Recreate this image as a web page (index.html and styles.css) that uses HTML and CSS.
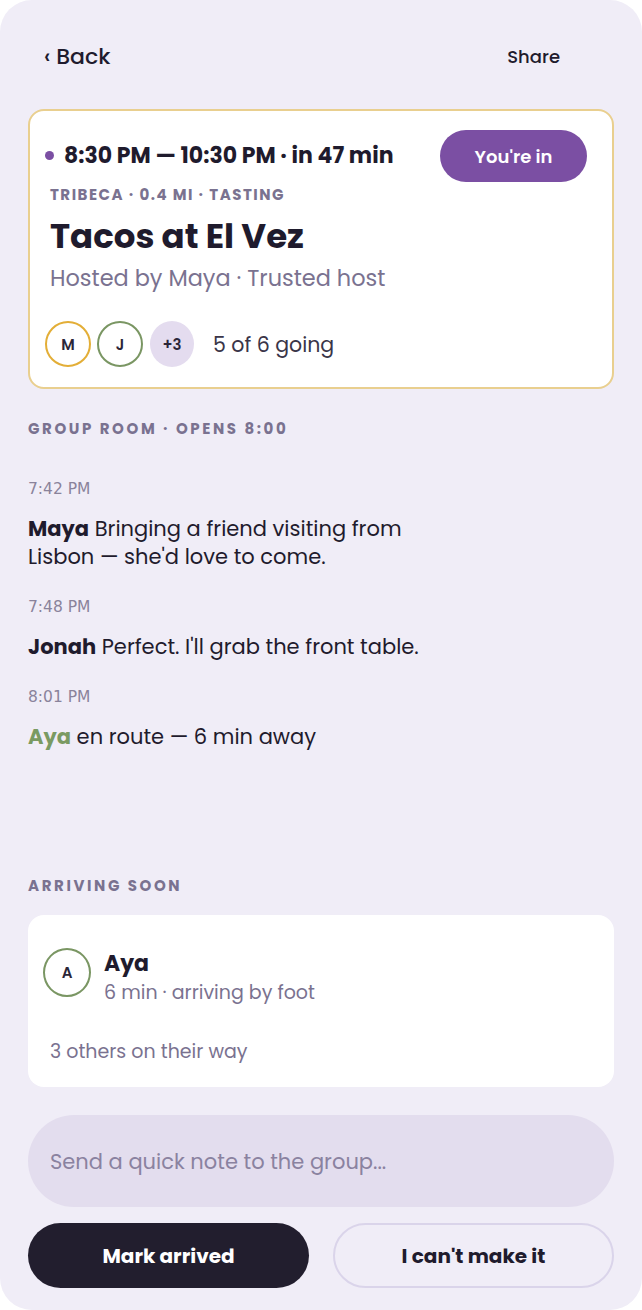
FILE: index.html
```html
<!DOCTYPE html>
<html lang="en">
<head>
  <meta charset="UTF-8" />
  <meta name="viewport" content="width=device-width, initial-scale=1.0" />
  <title>Tacos at El Vez</title>
  <link rel="stylesheet" href="styles.css">
</head>
<body>
  <div class="phone">
    <header class="topbar">
      <a class="back">‹ Back</a>
      <a class="share">Share</a>
    </header>

    <section class="event-card">
      <div class="event-top">
        <div class="event-time"><span class="dot"></span>8:30 PM — 10:30 PM · in 47 min</div>
        <button class="pill-in">You're in</button>
      </div>
      <div class="event-meta">TRIBECA · 0.4 MI · TASTING</div>
      <h1 class="event-title">Tacos at El Vez</h1>
      <div class="event-host">Hosted by Maya · Trusted host</div>
      <div class="going">
        <span class="avatar gold">M</span>
        <span class="avatar green">J</span>
        <span class="avatar more">+3</span>
        <span class="going-text">5 of 6 going</span>
      </div>
    </section>

    <section class="room">
      <div class="section-label">GROUP ROOM · OPENS 8:00</div>
      <div class="messages">
        <div class="msg">
          <div class="stamp">7:42 PM</div>
          <p class="msg-text"><b>Maya</b> Bringing a friend visiting from<br>Lisbon — she'd love to come.</p>
        </div>
        <div class="msg">
          <div class="stamp">7:48 PM</div>
          <p class="msg-text"><b>Jonah</b> Perfect. I'll grab the front table.</p>
        </div>
        <div class="msg">
          <div class="stamp">8:01 PM</div>
          <p class="msg-text"><b class="aya">Aya</b> en route — 6 min away</p>
        </div>
      </div>
    </section>

    <section class="arriving">
      <div class="section-label">ARRIVING SOON</div>
      <div class="arrive-card">
        <div class="arrive-row">
          <span class="avatar green big">A</span>
          <div class="arrive-info">
            <div class="arrive-name">Aya</div>
            <div class="arrive-sub">6 min · arriving by foot</div>
          </div>
        </div>
        <div class="arrive-others">3 others on their way</div>
      </div>
    </section>

    <div class="note">Send a quick note to the group...</div>

    <div class="actions">
      <button class="btn dark">Mark arrived</button>
      <button class="btn ghost">I can't make it</button>
    </div>
  </div>
</body>
</html>
```

FILE: styles.css
```css
body {
  margin: 0;
  background: #fff;
  font-family: 'Poppins', 'Inter', sans-serif;
  color: #1f1b2d;
}
.phone {
  width: 642px;
  height: 1310px;
  box-sizing: border-box;
  background: #f0edf7;
  border-radius: 32px;
  padding: 0 28px 22px;
  display: flex;
  flex-direction: column;
}
.topbar {
  display: flex;
  justify-content: space-between;
  align-items: center;
  height: 32px;
  margin-top: 40px;
  padding: 0 54px 0 16px;
}
.back {
  font-size: 22px;
  font-weight: 500;
}
.share {
  font-size: 18px;
  font-weight: 500;
}
.event-card {
  margin-top: 37px;
  background: #fff;
  border: 2px solid #e9cf8f;
  border-radius: 16px;
  padding: 19px 25px 20px 20px;
}
.event-top {
  display: flex;
  justify-content: space-between;
  align-items: center;
}
.event-time {
  display: flex;
  align-items: center;
  gap: 10px;
  font-weight: 700;
  font-size: 22px;
  margin-left: -5px;
  margin-top: -2px;
}
.dot {
  width: 9px;
  height: 9px;
  border-radius: 50%;
  background: #7b4fa3;
}
.pill-in {
  height: 52px;
  width: 147px;
  border: none;
  border-radius: 26px;
  background: #7b4fa3;
  color: #fff;
  font-family: inherit;
  font-size: 18px;
  font-weight: 600;
}
.event-meta {
  margin-top: 4px;
  font-size: 15px;
  line-height: 18px;
  font-weight: 700;
  letter-spacing: 1.5px;
  color: #7a7290;
}
.event-title {
  margin: 12px 0 0;
  font-size: 34px;
  line-height: 40px;
  font-weight: 700;
}
.event-host {
  margin-top: 8px;
  font-size: 22.4px;
  line-height: 28px;
  color: #7a7290;
}
.going {
  margin-top: 29px;
  margin-left: -5px;
  display: flex;
  align-items: center;
  gap: 6px;
}
.avatar {
  width: 46px;
  height: 46px;
  box-sizing: border-box;
  border-radius: 50%;
  display: flex;
  align-items: center;
  justify-content: center;
  font-size: 15px;
  font-weight: 600;
  color: #2b2638;
}
.avatar.gold { border: 2px solid #e3ae37; }
.avatar.green { border: 2px solid #7a9663; }
.avatar.more { background: #e4dcef; width: 44px; margin-left: 1px; }
.going-text {
  margin-left: 13px;
  font-size: 20.5px;
  color: #3a3548;
}
.room {
  flex: 1;
}
.section-label {
  font-size: 15px;
  line-height: 18px;
  font-weight: 700;
  letter-spacing: 2.6px;
  color: #7a7290;
}
.room .section-label {
  margin-top: 31px;
}
.messages {
  margin-top: 42px;
  display: flex;
  flex-direction: column;
  gap: 27px;
}
.stamp {
  font-family: 'DejaVu Sans', sans-serif;
  font-size: 15.5px;
  line-height: 18px;
  color: #8a839b;
}
.msg-text {
  margin: 17px 0 0;
  font-size: 21px;
  line-height: 28px;
}
.msg-text b {
  font-weight: 700;
}
.msg-text .aya {
  color: #7a9a62;
}
.arriving .section-label {
  margin-bottom: 20px;
}
.arrive-card {
  background: #fff;
  border-radius: 16px;
  padding: 33px 22px 22px 15px;
}
.arrive-row {
  display: flex;
  align-items: flex-start;
  gap: 13px;
}
.avatar.big {
  width: 48px;
  height: 49px;
}
.arrive-info {
  margin-top: 2px;
}
.arrive-name {
  font-size: 22px;
  line-height: 28px;
  font-weight: 700;
}
.arrive-sub {
  font-size: 19px;
  line-height: 30px;
  color: #7a7290;
}
.arrive-others {
  margin-top: 31px;
  padding-left: 7px;
  font-size: 19px;
  line-height: 26px;
  color: #7a7290;
}
.note {
  margin-top: 28px;
  height: 92px;
  border-radius: 46px;
  background: #e3ddee;
  display: flex;
  align-items: center;
  padding-left: 22px;
  font-size: 21px;
  color: #8a82a0;
}
.actions {
  margin-top: 16px;
  display: grid;
  grid-template-columns: 1fr 1fr;
  gap: 24px;
}
.btn {
  height: 65px;
  border-radius: 33px;
  font-family: inherit;
  font-size: 20px;
  font-weight: 700;
}
.btn.dark {
  background: #221e2e;
  color: #fff;
  border: none;
}
.btn.ghost {
  background: transparent;
  color: #1f1b2d;
  border: 2px solid #dad4ea;
}
```
